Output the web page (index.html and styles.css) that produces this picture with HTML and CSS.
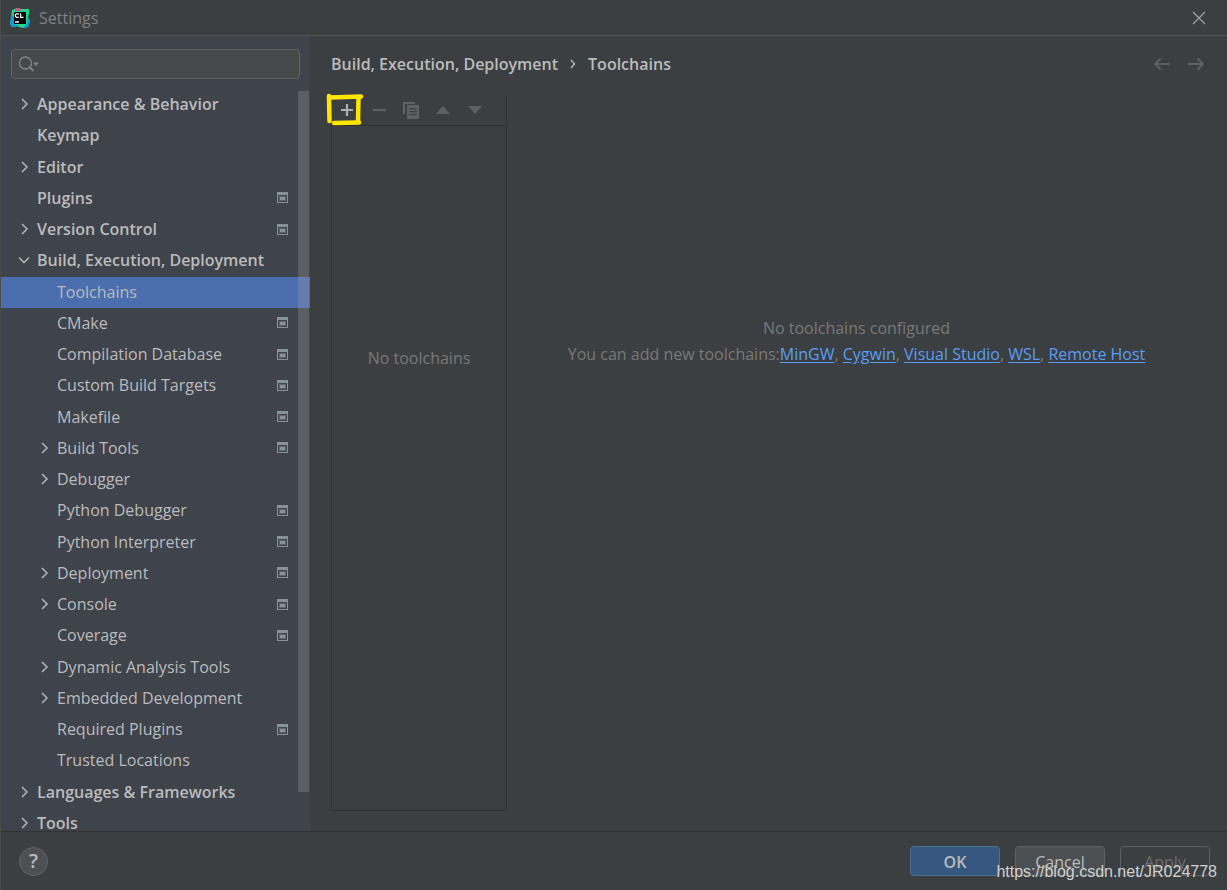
FILE: index.html
```html
<!DOCTYPE html>
<html lang="en">
<head>
<meta charset="utf-8">
<title>Settings</title>
<link rel="stylesheet" href="styles.css">
</head>
<body>
<svg class="defs" aria-hidden="true">
  <symbol id="right" viewBox="0 0 12 12"><path d="M4 1l5 5-5 5" fill="none" stroke="#afb1b3" stroke-width="1.6"/></symbol>
  <symbol id="down" viewBox="0 0 12 12"><path d="M1 3.500l5 5 5-5" fill="none" stroke="#afb1b3" stroke-width="1.6"/></symbol>
  <symbol id="project" viewBox="0 0 11 11"><path fill="#87939a" fill-rule="evenodd" d="M0 0h11v11H0zM1 3v7h9V3z"/><path fill="#5b656e" d="M2 4h7v5H2z"/><path fill="#87939a" d="M3 5h5v3H3z"/></symbol>
</svg>
<div class="window">
  <header class="titlebar">
    <svg class="logo" viewBox="0 0 20 20" role="img" aria-label="CLion">
      <path fill="#21d789" d="M2 2l5-2 5 1 7 0v5l-1 3 2 4-2 6-6 1-5-2-5 1-2-4 1-5z"/>
      <path fill="#e9458f" d="M5 1l4-1 3 3H5z"/>
      <path fill="#149ad7" d="M1 7l3 1v8l5 2-5 1-4-2zM17 9l3 4-2 6-5 1 4-5z"/>
      <path d="M4 4h12v12H4z"/>
      <path fill="none" stroke="#fff" stroke-width="1.3" d="M9 6.200Q5.300 5 5.400 7.500T9 9M10.600 5.200v4.100h3M5 14h4"/>
    </svg>
    <h1 class="title">Settings</h1>
    <button class="icon-button close" aria-label="Close"><svg width="14" height="14" viewBox="0 0 14 14"><path d="M1 1l12 12M13 1L1 13" stroke="#a0a2a3" stroke-width="1.2"/></svg></button>
  </header>
  <div class="body">
    <aside class="sidebar">
      <label class="search">
        <svg width="22" height="18" viewBox="0 0 22 18"><circle cx="7.500" cy="8" r="6" fill="none" stroke="#7d8488" stroke-width="1.4"/><path d="M11.500 12l4 4" stroke="#7d8488" stroke-width="1.8"/><path d="M15 7.500h6l-3 3.500z" fill="#7d8488"/></svg>
        <input class="search-input" type="text" aria-label="Search settings">
      </label>
      <div class="tree-view">
        <ul class="tree">
          <li class="row top"><svg class="arrow"><use href="#right"/></svg><span class="name">Appearance &amp; Behavior</span></li>
          <li class="row top"><span class="arrow"></span><span class="name">Keymap</span></li>
          <li class="row top"><svg class="arrow"><use href="#right"/></svg><span class="name">Editor</span></li>
          <li class="row top"><span class="arrow"></span><span class="name">Plugins</span><svg class="project"><use href="#project"/></svg></li>
          <li class="row top"><svg class="arrow"><use href="#right"/></svg><span class="name">Version Control</span><svg class="project"><use href="#project"/></svg></li>
          <li class="row top"><svg class="arrow"><use href="#down"/></svg><span class="name">Build, Execution, Deployment</span></li>
          <li class="row selected"><span class="arrow"></span><span class="name">Toolchains</span></li>
          <li class="row"><span class="arrow"></span><span class="name">CMake</span><svg class="project"><use href="#project"/></svg></li>
          <li class="row"><span class="arrow"></span><span class="name">Compilation Database</span><svg class="project"><use href="#project"/></svg></li>
          <li class="row"><span class="arrow"></span><span class="name">Custom Build Targets</span><svg class="project"><use href="#project"/></svg></li>
          <li class="row"><span class="arrow"></span><span class="name">Makefile</span><svg class="project"><use href="#project"/></svg></li>
          <li class="row"><svg class="arrow"><use href="#right"/></svg><span class="name">Build Tools</span><svg class="project"><use href="#project"/></svg></li>
          <li class="row"><svg class="arrow"><use href="#right"/></svg><span class="name">Debugger</span></li>
          <li class="row"><span class="arrow"></span><span class="name">Python Debugger</span><svg class="project"><use href="#project"/></svg></li>
          <li class="row"><span class="arrow"></span><span class="name">Python Interpreter</span><svg class="project"><use href="#project"/></svg></li>
          <li class="row"><svg class="arrow"><use href="#right"/></svg><span class="name">Deployment</span><svg class="project"><use href="#project"/></svg></li>
          <li class="row"><svg class="arrow"><use href="#right"/></svg><span class="name">Console</span><svg class="project"><use href="#project"/></svg></li>
          <li class="row"><span class="arrow"></span><span class="name">Coverage</span><svg class="project"><use href="#project"/></svg></li>
          <li class="row"><svg class="arrow"><use href="#right"/></svg><span class="name">Dynamic Analysis Tools</span></li>
          <li class="row"><svg class="arrow"><use href="#right"/></svg><span class="name">Embedded Development</span></li>
          <li class="row"><span class="arrow"></span><span class="name">Required Plugins</span><svg class="project"><use href="#project"/></svg></li>
          <li class="row"><span class="arrow"></span><span class="name">Trusted Locations</span></li>
          <li class="row top"><svg class="arrow"><use href="#right"/></svg><span class="name">Languages &amp; Frameworks</span></li>
          <li class="row top"><svg class="arrow"><use href="#right"/></svg><span class="name">Tools</span></li>
        </ul>
        <div class="scroll-thumb"></div>
      </div>
    </aside>
    <main class="content">
      <div class="heading">
        <nav class="crumbs" aria-label="Breadcrumb"><span>Build, Execution, Deployment</span><svg width="6" height="10" viewBox="0 0 6 10"><path d="M1 1l3.500 4L1 9" fill="none" stroke="#bbb" stroke-width="1.3"/></svg><span>Toolchains</span></nav>
        <div class="history">
          <button class="icon-button" aria-label="Back" disabled><svg width="18" height="14" viewBox="0 0 18 14"><path d="M17 7H2M7.500 1.500L2 7l5.500 5.500" fill="none" stroke="#5e6061" stroke-width="2"/></svg></button>
          <button class="icon-button" aria-label="Forward" disabled><svg width="18" height="14" viewBox="0 0 18 14"><path d="M1 7h15M10.500 1.500L16 7l-5.500 5.500" fill="none" stroke="#5e6061" stroke-width="2"/></svg></button>
        </div>
      </div>
      <div class="panes">
        <section class="list-pane">
          <div class="toolbar">
            <button class="icon-button tool" aria-label="Add"><svg width="14" height="14" viewBox="0 0 14 14"><path d="M7 1v12M1 7h12" stroke="#afb1b3" stroke-width="2.200"/></svg>
              <svg class="marker" width="38" height="34" viewBox="0 0 38 34" fill="none" stroke="#ffe600" stroke-width="4.500" stroke-linecap="round"><path d="M3 3L3.500 28"/><path d="M4 4.500L35 3.500"/><path d="M32.500 5L32 29"/><path d="M8 30L33 29.500"/></svg></button>
            <button class="icon-button tool" aria-label="Remove" disabled><svg width="14" height="14" viewBox="0 0 14 14"><path d="M1 7h13" stroke="#5e6061" stroke-width="2.200"/></svg></button>
            <button class="icon-button tool" aria-label="Copy" disabled><svg width="16" height="18" viewBox="0 0 16 18"><path fill="#5e6061" fill-rule="evenodd" d="M0 1h12v2H2v10H0zM4 4h12v14H4zM6.500 7v1.300h7V7zM6.500 10v1.300h7V10zM6.500 13v1.300h7V13z"/></svg></button>
            <button class="icon-button tool" aria-label="Move up" disabled><svg width="14" height="8" viewBox="0 0 14 8"><path d="M0 8l7-8 7 8z" fill="#5e6061"/></svg></button>
            <button class="icon-button tool" aria-label="Move down" disabled><svg width="14" height="8" viewBox="0 0 14 8"><path d="M0 0h14L7 8z" fill="#5e6061"/></svg></button>
          </div>
          <div class="list-empty">No toolchains</div>
        </section>
        <section class="detail">
          <p class="line">No toolchains configured</p>
          <p class="line">You can add new toolchains:<a href="#">MinGW</a>, <a href="#">Cygwin</a>, <a href="#">Visual Studio</a>, <a href="#">WSL</a>, <a href="#">Remote Host</a></p>
        </section>
      </div>
    </main>
  </div>
  <footer class="footer">
    <button class="help" aria-label="Help">?</button>
    <div class="actions">
      <button class="button primary">OK</button>
      <button class="button">Cancel</button>
      <button class="button inactive" disabled>Apply</button>
    </div>
    <span class="watermark">https://blog.csdn.net/JR024778</span>
  </footer>
</div>
</body>
</html>
```
FILE: styles.css
```css
* { box-sizing: border-box; }
body {
  margin: 0;
  background: #3c3f41;
  color: #bbbbbb;
  font: 16px/24px "Open Sans", "Noto Sans", sans-serif;
}
button, input { font: inherit; color: inherit; }
svg { display: block; flex: none; }
.defs { position: absolute; width: 0; height: 0; }
.window {
  height: 100vh;
  display: flex;
  flex-direction: column;
  border-left: 1px solid #4b4b4b;
  overflow: hidden;
}
.titlebar {
  flex: none;
  height: 36px;
  display: flex;
  align-items: center;
  gap: 9px;
  padding: 0 21px 0 9px;
  border-bottom: 1px solid #515354;
}
.logo { width: 20px; height: 20px; }
.title { margin: 0; font-size: 16px; font-weight: 400; color: #7f8081; }
.icon-button {
  display: flex;
  align-items: center;
  justify-content: center;
  padding: 0;
  border: 0;
  background: none;
}
.close { margin-left: auto; }
.body { flex: 1; min-height: 0; display: flex; }
.sidebar {
  flex: none;
  width: 309px;
  display: flex;
  flex-direction: column;
  background: #3f434c;
}
.search {
  flex: none;
  height: 30px;
  margin: 13px 10px 10px;
  padding: 0 6px;
  display: flex;
  align-items: center;
  border: 1px solid #646464;
  border-radius: 4px;
  background: #45494a;
}
.search-input { flex: 1; min-width: 0; border: 0; outline: 0; background: none; }
.tree-view { position: relative; flex: 1; min-height: 0; overflow: hidden; }
.tree {
  height: 750px;
  margin: 0;
  padding: 0;
  list-style: none;
  display: grid;
  grid-auto-rows: 1fr;
}
.row { display: flex; align-items: center; gap: 7px; padding: 0 22px 1px 37px; }
.top { padding-left: 17px; font-weight: 600; }
.selected { background: #4b6eaf; }
.arrow { flex: none; width: 12px; height: 12px; }
.name { flex: 1; white-space: nowrap; }
.project { width: 11px; height: 11px; }
.scroll-thumb {
  position: absolute;
  top: 2px;
  right: 1px;
  width: 11px;
  height: 701px;
  background: rgba(166, 166, 166, 0.28);
}
.content {
  flex: 1;
  min-width: 0;
  display: flex;
  flex-direction: column;
  padding: 16px 21px 20px 21px;
}
.heading { display: flex; align-items: center; justify-content: space-between; }
.crumbs { display: flex; align-items: center; gap: 12px; font-weight: 600; }
.history { display: flex; gap: 16px; padding-right: 1px; }
.panes { flex: 1; min-height: 0; display: flex; padding-top: 19px; }
.list-pane {
  flex: none;
  width: 176px;
  display: flex;
  flex-direction: column;
  border-right: 1px solid #323232;
}
.toolbar { flex: none; height: 31px; display: flex; align-items: center; border-bottom: 1px solid #323232; }
.tool { position: relative; flex: none; width: 32px; height: 28px; }
.marker { position: absolute; left: -5px; top: -3px; }
.list-empty {
  flex: 1;
  display: flex;
  align-items: center;
  justify-content: center;
  padding-bottom: 220px;
  border: 1px solid #323232;
  border-width: 0 0 1px 1px;
  color: #787878;
}
.detail {
  flex: 1;
  padding-top: 221px;
  text-align: center;
  color: #787878;
}
.line { margin: 0 0 2px; white-space: nowrap; }
.line a { color: #589df6; text-underline-offset: 2px; }
.footer {
  position: relative;
  flex: none;
  height: 59px;
  display: flex;
  align-items: center;
  justify-content: space-between;
  padding: 0 17px 0 18px;
  border-top: 1px solid #323232;
}
.help {
  width: 29px;
  height: 29px;
  padding: 0;
  border: 1px solid #646667;
  border-radius: 50%;
  background: #4c5052;
  font-size: 20px;
  font-weight: 600;
  line-height: 26px;
}
.actions { display: flex; gap: 15px; }
.button {
  width: 90px;
  height: 30px;
  padding: 2px 0 0;
  border: 1px solid #5e6060;
  border-radius: 4px;
  background: #4c5052;
}
.primary { background: #365880; border-color: #4c708c; font-weight: 600; }
.inactive { background: none; color: #6a6c6d; }
.watermark {
  position: absolute;
  right: 10px;
  bottom: 6px;
  font: 16px/24px "Liberation Sans", Arial, sans-serif;
  color: #d0d0d0;
}
```
